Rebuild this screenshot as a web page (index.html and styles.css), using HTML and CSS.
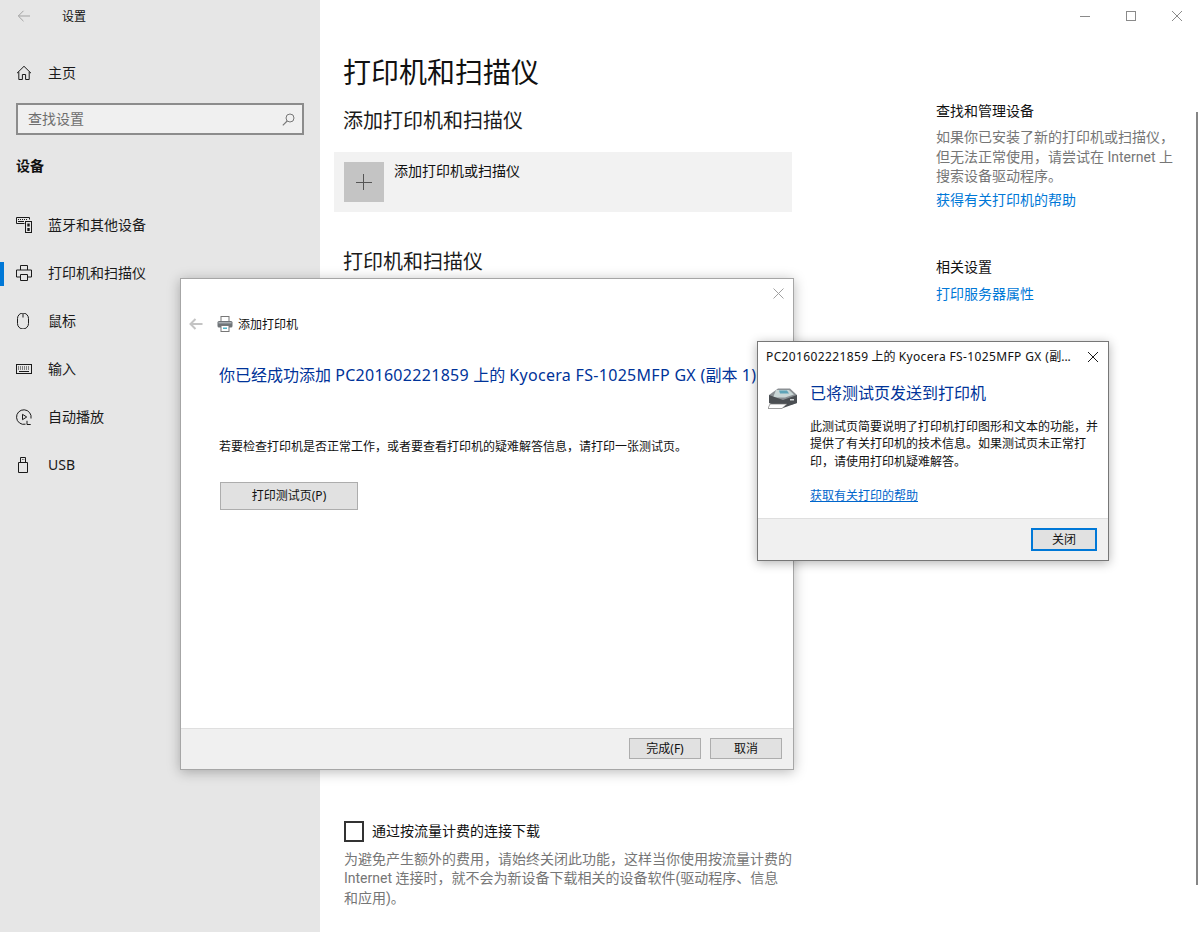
FILE: index.html
```html
<!DOCTYPE html>
<html lang="zh-CN">
<head>
<meta charset="utf-8">
<title>设置</title>
<link rel="stylesheet" href="styles.css">
</head>
<body>
<div class="app">
  <aside class="sidebar">
    <div class="titlebar">
      <svg class="back" width="16" height="16" viewBox="0 0 16 16"><path d="M14 8H2.5M7.5 2.8 2.3 8l5.2 5.2" fill="none" stroke="#a3a3a3" stroke-width="1"/></svg>
      <span>设置</span>
    </div>
    <div class="nav-row home">
      <svg width="16" height="16" viewBox="0 0 16 16"><path d="M1 8.2 8 1.3l7 6.9M2.8 6.8v7.7h3.6V9.5h3.2v5h3.6V6.8" fill="none" stroke="#1a1a1a" stroke-width="1"/></svg>
      <span>主页</span>
    </div>
    <div class="search">
      <span>查找设置</span>
      <svg width="13" height="13" viewBox="0 0 13 13"><circle cx="8" cy="5" r="4" fill="none" stroke="#777" stroke-width="1"/><path d="M5.2 8 .8 12.4" stroke="#777" stroke-width="1.1"/></svg>
    </div>
    <div class="group">设备</div>
    <nav class="nav">
      <div class="nav-row">
        <svg width="16" height="16" viewBox="0 0 16 16"><path d="M.5.5h13v2M.5.5v6h8" fill="none" stroke="#1a1a1a"/><path d="M2 2.5h1M4 2.5h1M6 2.5h1M8 2.5h1M10 2.5h1M2 4.5h6" stroke="#1a1a1a"/><rect x="9.5" y="4.5" width="6" height="11" fill="none" stroke="#1a1a1a"/><rect x="11.3" y="6.5" width="2.4" height="3" fill="#1a1a1a"/><rect x="11.3" y="11" width="2.4" height="3" fill="#1a1a1a"/></svg>
        <span>蓝牙和其他设备</span>
      </div>
      <div class="nav-row active">
        <svg width="16" height="16" viewBox="0 0 16 16"><path d="M4.5 5V.5h7V5M4.5 12H.5V5h15v7h-4M4.5 9.5h7v6h-7z" fill="none" stroke="#1a1a1a"/></svg>
        <span>打印机和扫描仪</span>
      </div>
      <div class="nav-row">
        <svg width="16" height="16" viewBox="0 0 16 16"><path d="M1.5 5.5a5.5 5.5 0 0 1 11 0v5a5.5 5.5 0 0 1-11 0zM7 .5v4" fill="none" stroke="#1a1a1a"/></svg>
        <span>鼠标</span>
      </div>
      <div class="nav-row">
        <svg width="16" height="16" viewBox="0 0 16 16"><rect x=".5" y="3.5" width="15" height="9" fill="none" stroke="#1a1a1a"/><path d="M2 6h12M2 8h12" stroke="#1a1a1a" stroke-dasharray="1 1"/><path d="M3 10.5h10" stroke="#1a1a1a"/></svg>
        <span>输入</span>
      </div>
      <div class="nav-row">
        <svg width="16" height="16" viewBox="0 0 16 16"><path d="M9.5 15.2A7.3 7.3 0 1 1 15 9.5M11 11.8v3.7h3.7" fill="none" stroke="#1a1a1a"/><path d="M6.5 5.3v5.4L10.7 8z" fill="none" stroke="#1a1a1a"/></svg>
        <span>自动播放</span>
      </div>
      <div class="nav-row">
        <svg width="16" height="16" viewBox="0 0 16 16"><path d="M2.5 5.5h9v10h-9zM4.5 5.5V.5h5v5M6 2.5h.6M7.6 2.5h.6" fill="none" stroke="#1a1a1a"/></svg>
        <span>USB</span>
      </div>
    </nav>
  </aside>

  <main class="main">
    <h1>打印机和扫描仪</h1>
    <h2 class="add-title">添加打印机和扫描仪</h2>
    <div class="add-card">
      <div class="tile"><svg width="16" height="16" viewBox="0 0 16 16"><path d="M7.5 0v16M0 8.5h16" stroke="#555" stroke-width="1"/></svg></div>
      <span>添加打印机或扫描仪</span>
    </div>
    <h2 class="list-title">打印机和扫描仪</h2>
    <div class="list-space"></div>
    <label class="check">
      <span class="box"></span>
      <span class="check-label">通过按流量计费的连接下载</span>
    </label>
    <p class="note">为避免产生额外的费用，请始终关闭此功能，这样当你使用按流量计费的 Internet 连接时，就不会为新设备下载相关的设备软件(驱动程序、信息<br>和应用)。</p>
  </main>

  <section class="side">
    <div class="winctl">
      <svg width="10" height="10" viewBox="0 0 10 10"><path d="M0 5.5h10" stroke="#8a8a8a"/></svg>
      <svg width="10" height="10" viewBox="0 0 10 10"><rect x=".5" y=".5" width="9" height="9" fill="none" stroke="#8a8a8a"/></svg>
      <svg width="10" height="10" viewBox="0 0 10 10"><path d="M0 0l10 10M10 0 0 10" stroke="#8a8a8a"/></svg>
    </div>
    <h3 class="find-title">查找和管理设备</h3>
    <p class="desc">如果你已安装了新的打印机或扫描仪，但无法正常使用，请尝试在 Internet 上搜索设备驱动程序。</p>
    <a class="link help-link">获得有关打印机的帮助</a>
    <h3 class="rel-title">相关设置</h3>
    <a class="link">打印服务器属性</a>
  </section>
  <div class="scrollbar"></div>
</div>

<div class="dialog wizard">
  <svg class="wiz-close" width="11" height="11" viewBox="0 0 11 11"><path d="M.5.5l10 10M10.5.5l-10 10" stroke="#a0a0a0"/></svg>
  <div class="wiz-head">
    <svg width="14" height="12" viewBox="0 0 14 12"><path d="M13.5 6H2M6.5 1 1.5 6l5 5" fill="none" stroke="#c4c4c4" stroke-width="2"/></svg>
    <svg class="wiz-printer" width="16" height="16" viewBox="0 0 16 16"><rect x="4" y="0.5" width="8" height="5" fill="#fff" stroke="#777"/><rect x="0.5" y="5" width="15" height="6.5" rx="1.5" fill="#6f7478"/><rect x="1.5" y="6" width="13" height="1.5" fill="#a8adb1"/><rect x="4" y="9.5" width="8" height="6" fill="#fff" stroke="#777"/><rect x="6" y="11.5" width="4" height="1.5" fill="#4fb3c8"/></svg>
    <span>添加打印机</span>
  </div>
  <div class="wiz-body">
    <div class="wiz-heading">你已经成功添加 <span class="wide">PC201602221859</span> 上的 <span class="wide">Kyocera FS-1025MFP GX (</span>副本 <span class="wide">1)</span></div>
    <p>若要检查打印机是否正常工作，或者要查看打印机的疑难解答信息，请打印一张测试页。</p>
    <button class="btn test-btn">打印测试页(P)</button>
  </div>
  <div class="foot wiz-foot">
    <button class="btn foot-btn">完成(F)</button>
    <button class="btn foot-btn">取消</button>
  </div>
</div>

<div class="dialog notice">
  <div class="notice-title">
    <span><span class="wide">PC201602221859</span> 上的 <span class="wide">Kyocera FS-1025MFP GX (</span>副...</span>
    <svg width="10" height="10" viewBox="0 0 10 10"><path d="M0 0l10 10M10 0 0 10" stroke="#1a1a1a"/></svg>
  </div>
  <div class="notice-body">
    <svg class="notice-icon" width="30" height="22" viewBox="0 0 30 22"><path d="M1 8 10 1.5h12L29 8v8l-6 2H7l-6-2z" fill="#8b9094"/><path d="M8 3h13l5 4.5-9 3H5z" fill="#c9d6d6"/><path d="M11 3.5h8l2 3h-9z" fill="#5fa4b8"/><path d="M1 8l14 5 14-5v8l-14 5-14-5z" fill="#4b4f53"/><path d="M2 17h17l-5 4.5H0z" fill="#fff" stroke="#777" stroke-width=".7"/><rect x="22" y="12" width="4" height="1.5" fill="#cfd3d5"/></svg>
    <div class="notice-text">
      <div class="notice-heading">已将测试页发送到打印机</div>
      <p>此测试页简要说明了打印机打印图形和文本的功能，并提供了有关打印机的技术信息。如果测试页未正常打印，请使用打印机疑难解答。</p>
      <a class="notice-link">获取有关打印的帮助</a>
    </div>
  </div>
  <div class="foot notice-foot">
    <button class="btn close-btn">关闭</button>
  </div>
</div>
</body>
</html>
```

FILE: styles.css
```css
* { box-sizing: border-box; }
html, body { margin: 0; height: 100%; }
body {
  background: #fff;
  color: #000;
  font-family: "Noto Sans", "Noto Sans CJK SC", sans-serif;
  overflow: hidden;
  position: relative;
}
svg { display: block; flex: none; }
p, h1, h2, h3 { margin: 0; font-weight: 400; }
.wide { letter-spacing: .3px; }
.notice-title .wide { letter-spacing: .37px; }

.app { display: flex; height: 932px; }

.sidebar { width: 320px; flex: none; background: #e6e6e6; font-size: 14px; }
.titlebar { display: flex; align-items: center; height: 32px; padding-left: 16px; font-size: 12px; color: #111; }
.titlebar .back { margin-right: 30px; }
.nav-row { position: relative; display: flex; align-items: center; gap: 16px; height: 48px; padding-left: 16px; color: #1a1a1a; line-height: 20px; }
.home { margin-top: 17px; }
.search { display: flex; align-items: center; justify-content: space-between; height: 32px; margin: 6px 16px 0; padding: 0 7px 0 10px; border: 2px solid #8c8c8c; background: #f0f0f0; color: #6e6e6e; line-height: 20px; }
.group { margin: 21px 0 0 16px; font-weight: 700; line-height: 20px; color: #111; }
.nav { margin-top: 25px; }
.active::before { content: ""; position: absolute; left: 0; top: 13px; width: 4px; height: 24px; background: #0078d7; }

.main { width: 472px; flex: none; padding-left: 24px; font-size: 14px; }
h1 { margin: 52px 0 0 -1px; font-size: 28px; line-height: 40px; color: #111; }
h2 { margin-left: -1px; font-size: 20px; line-height: 28px; color: #1a1a1a; }
.add-title { margin-top: 15px; }
.add-card { display: flex; gap: 10px; height: 60px; margin: 17px 0 0 -10px; padding: 10px; background: #f2f2f2; line-height: 20px; color: #111; }
.add-card span { margin-top: -1px; }
.tile { display: flex; align-items: center; justify-content: center; width: 40px; height: 40px; background: #c4c4c4; }
.list-title { margin-top: 36px; }
.list-space { height: 545px; }
.check { display: flex; align-items: center; gap: 8px; height: 21px; color: #111; line-height: 20px; }
.check-label { margin-top: -2px; }
.box { width: 20px; height: 21px; border: 2px solid #333; }
.note { margin-top: 8px; line-height: 19.4px; color: #767676; width: 450px; font-family: Roboto, "Noto Sans CJK SC", sans-serif; }

.side { position: relative; flex: 1; padding-left: 144px; font-size: 14px; line-height: 20px; }
.winctl { position: absolute; top: 11px; left: 288px; display: flex; gap: 36px; }
.find-title { margin-top: 101px; font-size: 14px; line-height: 20px; color: #111; }
.desc { margin-top: 7px; width: 244px; line-height: 19.5px; color: #767676; font-family: Roboto, "Noto Sans CJK SC", sans-serif; }
.link { display: block; color: #0078d7; }
.help-link { margin-top: 3px; }
.rel-title { margin-top: 47px; font-size: 14px; line-height: 20px; color: #111; }
.rel-title + .link { margin-top: 7px; }
.scrollbar { position: absolute; left: 1196px; top: 112px; width: 2px; height: 773px; background: #858585; }

.dialog { position: absolute; display: flex; flex-direction: column; background: #fff; font-size: 12px; color: #111; }
.wizard { left: 180px; top: 278px; width: 614px; height: 492px; border: 1px solid #a6a6a6; box-shadow: 0 2px 12px rgba(0,0,0,.28); }
.wiz-close { position: absolute; top: 9px; right: 9px; }
.wiz-head { display: flex; align-items: center; height: 18px; margin: 36px 0 0 8px; line-height: 18px; }
.wiz-head span { margin-top: 2px; }
.wiz-printer { margin: 0 5px 0 14px; }
.wiz-body { flex: 1; padding-left: 38px; }
.wiz-heading { margin-top: 31px; font-size: 16px; line-height: 22px; color: #003399; white-space: nowrap; }
.wiz-body p { margin-top: 51px; line-height: 20px; }
.btn { display: block; padding: 0; border: 1px solid #adadad; background: #e1e1e1; color: #111; font: inherit; line-height: 18px; }
.test-btn { width: 138px; height: 28px; margin: 25px 0 0 1px; }
.foot { display: flex; justify-content: flex-end; background: #f0f0f0; border-top: 1px solid #dfdfdf; }
.wiz-foot { height: 41px; gap: 9px; padding: 9px 11px 0 0; }
.foot-btn { width: 72px; height: 21px; }

.notice { left: 757px; top: 341px; width: 352px; height: 220px; border: 1px solid #777; box-shadow: 0 2px 10px rgba(0,0,0,.3); }
.notice-title { display: flex; align-items: center; justify-content: space-between; height: 28px; margin-top: 1px; padding: 0 10px 0 8px; line-height: 18px; white-space: nowrap; }
.notice-body { position: relative; flex: 1; padding-left: 52px; }
.notice-icon { position: absolute; left: 10px; top: 16px; }
.notice-heading { margin-top: 11px; font-size: 16px; line-height: 22px; color: #003399; }
.notice-text p { width: 290px; margin-top: 14px; line-height: 17.4px; }
.notice-link { display: block; margin-top: 17px; line-height: 18px; color: #0066cc; text-decoration: underline; }
.notice-foot { height: 42px; padding: 9px 11px 0 0; }
.close-btn { width: 66px; height: 23px; border: 2px solid #0078d7; }
```
